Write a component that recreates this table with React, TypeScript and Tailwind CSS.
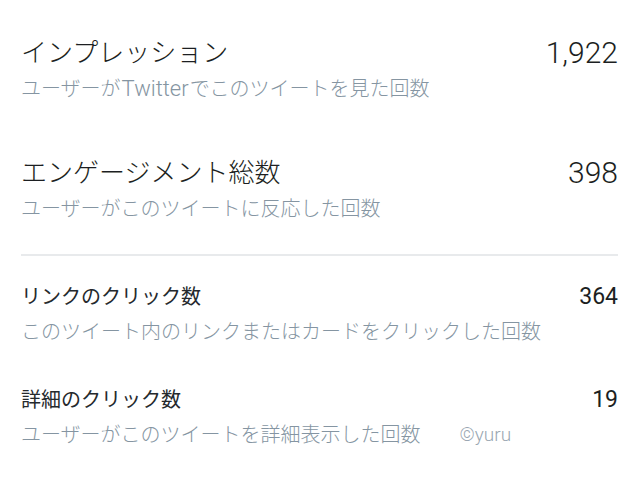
import type { ReactNode } from 'react';

const font = { fontFamily: 'Roboto, "Noto Sans CJK JP", sans-serif' };

function BigRow({ title, value, sub }: { title: string; value: string; sub: ReactNode }) {
  return (
    <div>
      <div className="flex items-center justify-between h-[34px]">
        <span className="text-[26px] leading-[34px] font-light text-[#1c1f22]">{title}</span>
        <span className="text-[30px] leading-[34px] font-light text-[#1c1f22]">{value}</span>
      </div>
      <div className="mt-[5px] text-[20px] leading-[28px] font-light text-[#8595a2]">{sub}</div>
    </div>
  );
}

function SmallRow({ title, value, sub, mark }: { title: string; value: string; sub: string; mark?: string }) {
  return (
    <div>
      <div className="flex items-center justify-between h-[28px]">
        <span className="text-[20px] leading-[28px] text-[#25292d]">{title}</span>
        <span className="text-[23px] leading-[28px] text-[#1c1f22]">{value}</span>
      </div>
      <div className="mt-[7px] flex items-center text-[20px] leading-[28px] font-light text-[#8595a2]">
        <span>{sub}</span>
        {mark && <span className="ml-[39px] text-[19px] font-light text-[#9aa7b2]">{mark}</span>}
      </div>
    </div>
  );
}

export default function App() {
  return (
    <div className="w-[640px] h-[480px] bg-white overflow-hidden pl-[21px] pr-[22px] pt-[36px]" style={font}>
      <BigRow
        title="インプレッション"
        value="1,922"
        sub={
          <>
            ユーザーが<span className="text-[22px] px-[1px]">Twitter</span>でこのツイートを見た回数
          </>
        }
      />
      <div className="mt-[53px]">
        <BigRow title="エンゲージメント総数" value="398" sub="ユーザーがこのツイートに反応した回数" />
      </div>
      <div className="mt-[31px] h-[2px] bg-[#e8eaec]" />
      <div className="mt-[27px]">
        <SmallRow title="リンクのクリック数" value="364" sub="このツイート内のリンクまたはカードをクリックした回数" />
      </div>
      <div className="mt-[40px]">
        <SmallRow title="詳細のクリック数" value="19" sub="ユーザーがこのツイートを詳細表示した回数" mark="©yuru" />
      </div>
    </div>
  );
}
